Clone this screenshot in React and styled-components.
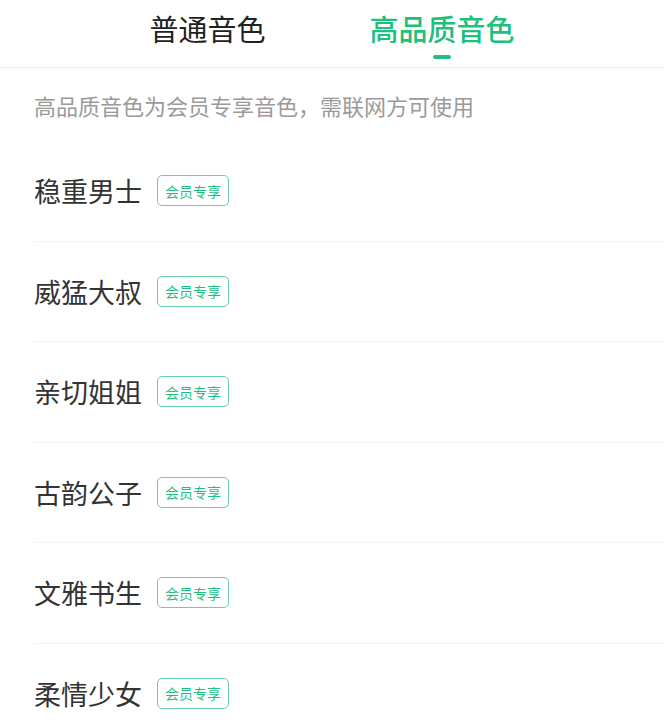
import styled, { createGlobalStyle } from "styled-components";

const GlobalStyle = createGlobalStyle`
  html, body {
    margin: 0;
    padding: 0;
    background: #ffffff;
  }
  body {
    font-family: "Noto Sans CJK SC", "Noto Sans", sans-serif;
  }
`;

const GREEN = "#1fbf7e";

const Page = styled.div`
  width: 664px;
  height: 720px;
  overflow: hidden;
  background: #ffffff;
`;

const Header = styled.header`
  height: 68px;
  box-sizing: border-box;
  display: flex;
  justify-content: center;
  gap: 104px;
  padding-top: 11px;
  border-bottom: 1px solid #efefef;
  box-shadow: 0 1px 2px rgba(0, 0, 0, 0.03);
`;

const Tab = styled.div`
  display: flex;
  flex-direction: column;
  align-items: center;
  font-size: 29px;
  line-height: 34px;
  font-weight: ${(p) => (p.$active ? 500 : 400)};
  color: ${(p) => (p.$active ? GREEN : "#222222")};
`;

const Indicator = styled.span`
  width: 18px;
  height: 4px;
  margin-top: 10px;
  border-radius: 2px;
  background: ${(p) => (p.$show ? GREEN : "transparent")};
`;

const Notice = styled.p`
  margin: 0;
  height: 73px;
  padding-left: 34px;
  display: flex;
  align-items: center;
  font-size: 22px;
  color: #9a9a9a;
`;

const List = styled.ul`
  list-style: none;
  margin: 0;
  padding: 0;
`;

const Row = styled.li`
  height: 100.5px;
  box-sizing: border-box;
  margin-left: 34px;
  display: flex;
  align-items: center;
  gap: 15px;
  border-bottom: 1px solid #f3f3f3;
`;

const Name = styled.span`
  font-size: 27px;
  color: #333333;
`;

const Badge = styled.span`
  height: 31px;
  box-sizing: border-box;
  padding: 0 7px;
  display: inline-flex;
  align-items: center;
  border: 1px solid #6ccfa4;
  border-radius: 5px;
  font-size: 14px;
  color: ${GREEN};
`;

const voices = ["稳重男士", "威猛大叔", "亲切姐姐", "古韵公子", "文雅书生", "柔情少女"];

export default function App() {
  return (
    <Page>
      <GlobalStyle />
      <Header>
        <Tab>
          普通音色
          <Indicator />
        </Tab>
        <Tab $active>
          高品质音色
          <Indicator $show />
        </Tab>
      </Header>
      <Notice>高品质音色为会员专享音色，需联网方可使用</Notice>
      <List>
        {voices.map((v) => (
          <Row key={v}>
            <Name>{v}</Name>
            <Badge>会员专享</Badge>
          </Row>
        ))}
      </List>
    </Page>
  );
}
